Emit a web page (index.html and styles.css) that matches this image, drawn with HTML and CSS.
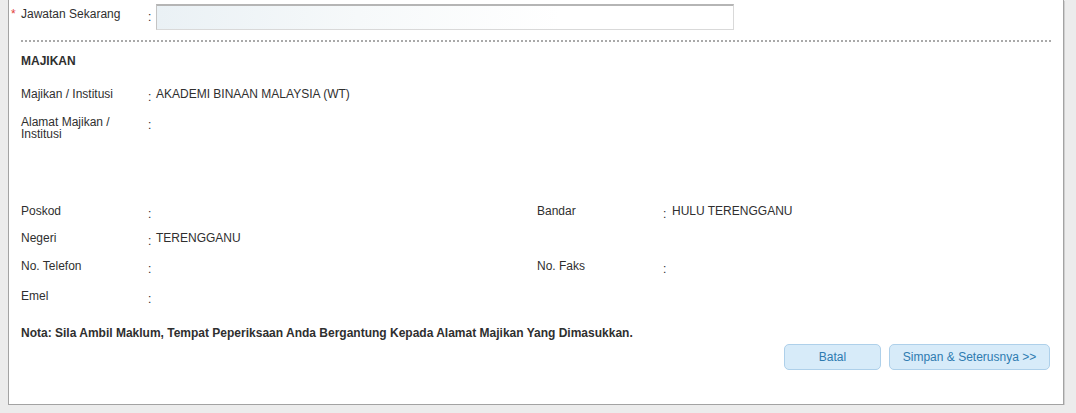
FILE: index.html
```html
<!DOCTYPE html>
<html lang="ms">
<head>
    <meta charset="UTF-8">
    <meta name="viewport" content="width=device-width, initial-scale=1.0">
    <title>Maklumat Majikan</title>
    <link rel="stylesheet" href="styles.css">
</head>
<body>
    <div class="panel">
        <div class="row row-jawatan">
            <div class="label"><span class="req">*</span>Jawatan Sekarang</div>
            <div class="colon">:</div>
            <div class="value"><input type="text" class="text-input"></div>
        </div>

        <div class="divider"></div>

        <h3 class="section-title">MAJIKAN</h3>

        <div class="row h-majikan">
            <div class="label">Majikan / Institusi</div>
            <div class="colon">:</div>
            <div class="value">AKADEMI BINAAN MALAYSIA (WT)</div>
        </div>
        <div class="row h-alamat">
            <div class="label tight">Alamat Majikan /<br>Institusi</div>
            <div class="colon">:</div>
            <div class="value"></div>
        </div>
        <div class="row h-poskod">
            <div class="label">Poskod</div>
            <div class="colon">:</div>
            <div class="value"></div>
            <div class="label">Bandar</div>
            <div class="colon">:</div>
            <div class="value">HULU TERENGGANU</div>
        </div>
        <div class="row h-negeri">
            <div class="label">Negeri</div>
            <div class="colon">:</div>
            <div class="value">TERENGGANU</div>
        </div>
        <div class="row h-telefon">
            <div class="label">No. Telefon</div>
            <div class="colon">:</div>
            <div class="value"></div>
            <div class="label">No. Faks</div>
            <div class="colon">:</div>
            <div class="value"></div>
        </div>
        <div class="row h-emel">
            <div class="label">Emel</div>
            <div class="colon">:</div>
            <div class="value"></div>
        </div>

        <p class="nota">Nota: Sila Ambil Maklum, Tempat Peperiksaan Anda Bergantung Kepada Alamat Majikan Yang Dimasukkan.</p>

        <div class="actions">
            <button class="btn btn-batal">Batal</button>
            <button class="btn btn-simpan">Simpan &amp; Seterusnya &gt;&gt;</button>
        </div>
    </div>
</body>
</html>
```

FILE: styles.css
```css
body {
    margin: 0;
    background-color: #ececec;
    font-family: Arial, "Liberation Sans", sans-serif;
    font-size: 12px;
    line-height: 14px;
    color: #2f2f2f;
}

.panel {
    margin-left: 8px;
    width: 1056px;
    background-color: #fff;
    border: 1px solid #a3a3a3;
    border-top: 0;
    box-shadow: 1px 1px 0 #cfcfcf;
    padding: 0 12px 33px 12px;
    box-sizing: border-box;
    height: 405px;
}

.row {
    display: grid;
    grid-template-columns: 127px 8px 381px 126px 9px 1fr;
    align-items: start;
}

.label {
    white-space: nowrap;
}

.label.tight {
    line-height: 12px;
    padding-top: 1px;
}

.colon {
    padding-top: 3px;
}

.req {
    color: #e2413b;
    display: inline-block;
    width: 10px;
    margin-left: -10px;
}

.row-jawatan {
    height: 34px;
    padding-top: 4px;
    box-sizing: border-box;
}

.row-jawatan .label {
    padding-top: 3px;
}

.row-jawatan .colon {
    padding-top: 6px;
}

.row-jawatan .value {
    grid-column: 3 / 6;
}

.text-input {
    display: block;
    width: 578px;
    height: 26px;
    box-sizing: border-box;
    margin: 0;
    border: 1px solid #d9d9d9;
    border-top: 2px solid #b5b5b5;
    border-left-color: #c4c4c4;
    background: linear-gradient(to right, #eaf1f5, #f6f9fa 35%, #ffffff 70%);
}

.divider {
    margin-top: 6px;
    border-top: 2px dotted #a9a9a9;
}

.section-title {
    margin: 0;
    padding-top: 12px;
    height: 45px;
    box-sizing: border-box;
    font-size: 12px;
    line-height: 14px;
    font-weight: bold;
}

.h-majikan { height: 28px; }
.h-alamat { height: 89px; }
.h-poskod { height: 27px; }
.h-negeri { height: 28px; }
.h-telefon { height: 30px; }
.h-emel { height: 37px; }

.nota {
    margin: 0;
    height: 18px;
    font-weight: bold;
}

.actions {
    display: flex;
    justify-content: flex-end;
    gap: 8px;
    padding-right: 1px;
}

.btn {
    height: 26px;
    padding: 0;
    background-color: #d7ebf9;
    border: 1px solid #aed0ea;
    border-radius: 5px;
    color: #2e7bb0;
    font-family: Arial, "Liberation Sans", sans-serif;
    font-size: 12px;
    cursor: pointer;
}

.btn-batal {
    width: 97px;
}

.btn-simpan {
    width: 161px;
}
```
